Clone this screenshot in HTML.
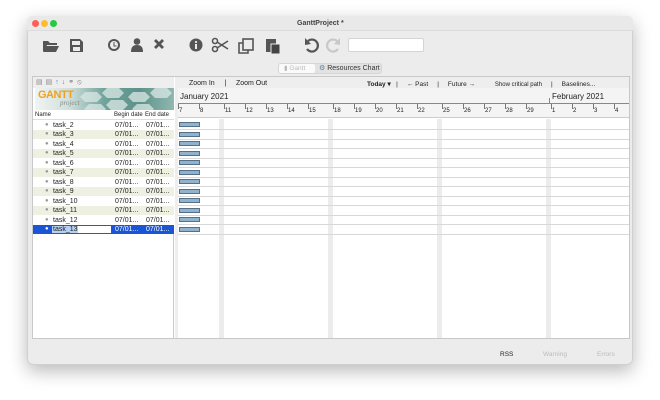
<!DOCTYPE html>
<html><head><meta charset="utf-8"><style>
*{margin:0;padding:0;box-sizing:border-box}
body{width:660px;height:400px;background:#fff;position:relative;overflow:hidden;font-family:"Liberation Sans",sans-serif;color:#222}
.a{position:absolute}
.win{left:27px;top:16px;width:606px;height:349px;background:#ececec;border-radius:6px;box-shadow:0 6px 18px rgba(0,0,0,.28);border:1px solid #d0d0d0}
.t{font-size:7px;position:absolute;white-space:nowrap}
</style></head><body>
<div class="a win"></div>
<div class="a" style="left:27px;top:16px;width:606px;height:15px;background:#e9e9e9;border-radius:6px 6px 0 0;border-bottom:1px solid #dcdcdc"></div>
<div class="a" style="left:32px;top:20px;width:7px;height:7px;border-radius:50%;background:#fe5f57"></div>
<div class="a" style="left:41px;top:20px;width:7px;height:7px;border-radius:50%;background:#febc2e"></div>
<div class="a" style="left:50px;top:20px;width:7px;height:7px;border-radius:50%;background:#28c840"></div>
<div class="t" style="left:297px;top:20px;font-weight:bold;color:#444">GanttProject *</div>

<svg class="a" style="left:0;top:0" width="660" height="60">
<g fill="#555">
<path d="M43 41h5l2 2h7v2h-10l-3 6h-1z"/><path d="M46 46h13l-3 6h-13z"/>
<path d="M70 39h10l3 3v10h-13z M72 41v4h8v-4z M73 47v4h7v-4z" fill-rule="evenodd"/>
<circle cx="114" cy="45" r="6"/><circle cx="114" cy="45" r="4" fill="#ececec"/><path d="M113.5 42h1v3.5h2v1h-3z"/>
<circle cx="137" cy="41.5" r="3.3"/><path d="M131 52c0-5 2-7 6-7s6 2 6 7z"/>
<path d="M154 41l2-2 3 3 3-3 2 2-3 3 3 3-2 2-3-3-3 3-2-2 3-3z"/>
<circle cx="196" cy="45" r="6.5"/><rect x="195" y="44" width="2" height="5" fill="#ececec"/><circle cx="196" cy="42" r="1.1" fill="#ececec"/>
</g>
<g fill="none" stroke="#555" stroke-width="1.6">
<circle cx="215" cy="41" r="2.5"/><circle cx="215" cy="49" r="2.5"/><path d="M217 42l11 7M217 48l11-7"/>
<path d="M243 43h-4v10h9v-3"/><rect x="243" y="39" width="10" height="11"/>
</g>
<path d="M308 41a6 6 0 1 1-1 8" fill="none" stroke="#555" stroke-width="2.2"/>
<path d="M305 38l0 7 6-1z" fill="#555"/>
<g fill="#555"><rect x="266" y="39" width="10" height="13"/><rect x="271" y="44" width="9" height="10" fill="#444" stroke="#ececec"/></g>
<path d="M337 41a6 6 0 1 0 1 8" fill="none" stroke="#c8c8c8" stroke-width="2.2"/><path d="M340 38l0 7-6-1z" fill="#c8c8c8"/>
</svg>
<div class="a" style="left:348px;top:38px;width:76px;height:14px;background:#fff;border:1px solid #d4d4d4;border-radius:2px"></div>

<div class="a" style="left:278px;top:63px;width:104px;height:11px;background:#e2e2e2;border:1px solid #d6d6d6;border-radius:3px"></div>
<div class="a" style="left:279px;top:64px;width:36px;height:9px;background:#fafafa;border-radius:2px"></div>
<div class="t" style="left:284px;top:64px;color:#bbb;font-size:6.5px">▮ Gantt</div>
<div class="t" style="left:319px;top:64px;color:#333;font-size:7px"><span style="color:#5a7ea8">⚙</span> Resources Chart</div>

<div class="a" style="left:32px;top:76px;width:598px;height:263px;background:#fff;border:1px solid #c8c8c8"></div>
<div class="a" style="left:33px;top:77px;width:141px;height:261px;background:#fff;border-right:1px solid #c8c8c8"></div>
<div class="a" style="left:33px;top:77px;width:141px;height:11px;background:#eee"></div>
<div class="t" style="left:36px;top:78px;color:#888;font-size:7px;letter-spacing:3px">▤▤<span style="color:#4a8ab0">↑↓</span>⚭⦸</div>
<div class="a" style="left:35px;top:88px;width:139px;height:22px;background:linear-gradient(90deg,#f0f4f2 0%,#cfdfdb 25%,#6fa39b 50%,#5d9289 75%,#8fb8b1 100%)"></div>
<svg class="a" style="left:75px;top:88px" width="99" height="22"><g fill="#dbe8e5" opacity=".75"><path d="M10 4h12l5 5-5 5h-12l-5-5z"/><path d="M32 0h12l5 5-5 5h-12l-5-5z"/><path d="M36 12h12l5 5-5 5h-12l-5-5z"/><path d="M58 4h12l5 5-5 5h-12l-5-5z"/><path d="M80 0h12l5 5-5 5h-12l-5-5z"/><path d="M14 16h12l5 5-5 5h-12l-5-5z"/><path d="M62 16h12l5 5-5 5h-12l-5-5z"/></g></svg>
<div class="t" style="left:38px;top:89px;font-size:11px;font-weight:bold;color:#f0a020;letter-spacing:-.5px">GANTT</div>
<div class="t" style="left:60px;top:99px;font-size:7px;font-style:italic;color:#888;font-family:'Liberation Serif',serif">project</div>
<div class="a" style="left:33px;top:110px;width:141px;height:10px;background:#fff;border-bottom:1px solid #ddd"></div>
<div class="t" style="left:35px;top:112px;font-size:6px">Name</div>
<div class="t" style="left:114px;top:112px;font-size:6px">Begin date</div>
<div class="t" style="left:145px;top:112px;font-size:6px">End date</div>
<div id="rows"></div>

<div class="a" style="left:175px;top:77px;width:3px;height:261px;background:#eee"></div>
<div class="a" style="left:178px;top:77px;width:451px;height:11px;background:#eee"></div>
<div class="t" style="left:189px;top:80px">Zoom In &nbsp; &nbsp; | &nbsp; &nbsp; Zoom Out</div>
<div class="t" style="left:367px;top:80px;font-size:6.5px"><b>Today ▾</b> &nbsp; | &nbsp; &nbsp; ← Past &nbsp; &nbsp; | &nbsp; &nbsp; Future → &nbsp; &nbsp; &nbsp; &nbsp; &nbsp; <span style="font-size:6px">Show critical path</span> &nbsp; &nbsp; | &nbsp; &nbsp; Baselines...</div>
<div class="a" style="left:178px;top:88px;width:451px;height:16px;background:#f4f4f4;border-bottom:1px solid #888"></div>
<div class="t" style="left:180px;top:92px;font-size:8px">January 2021</div>
<div class="a" style="left:549px;top:98px;width:1px;height:6px;background:#888"></div>
<div class="t" style="left:552px;top:92px;font-size:8px">February 2021</div>
<div class="a" style="left:178px;top:104px;width:451px;height:14px;background:#f4f4f4;border-bottom:1px solid #ccc"></div>
<div id="chart"></div>

<div class="t" style="left:500px;top:351px;font-size:6.5px;color:#222">RSS</div>
<div class="t" style="left:543px;top:351px;font-size:6.5px;color:#bbb">Warning</div>
<div class="t" style="left:597px;top:351px;font-size:6.5px;color:#bbb">Errors</div>

<script>
var r='';for(var i=0;i<12;i++){var y=120+i*9.5,sel=i==11;
var bg=sel?'#1a55d6':(i%2?'#eef0e2':'#fff');var c=sel?'#fff':'#222';
r+='<div class="a" style="left:33px;top:'+y+'px;width:141px;height:9.5px;background:'+bg+'"></div>';
r+='<div class="t" style="left:45px;top:'+(y+1.5)+'px;color:'+(sel?'#fff':'#999')+';font-size:6px">●</div>';
if(sel)r+='<div class="a" style="left:51px;top:'+y+'px;width:61px;height:9.5px;background:#fff;border:1px solid #555"></div><div class="a" style="left:52px;top:'+(y+1)+'px;width:26px;height:7.5px;background:#b6d0f4"></div>';
r+='<div class="t" style="left:53px;top:'+(y+1.5)+'px;color:#222">task_'+(i+2)+'</div>';
r+='<div class="t" style="left:115px;top:'+(y+1.5)+'px;color:'+c+'">07/01...</div><div class="t" style="left:146px;top:'+(y+1.5)+'px;color:'+c+'">07/01...</div>';}
document.getElementById('rows').innerHTML=r;
var h='';
[219,328,437,546].forEach(function(x){h+='<div class="a" style="left:'+x+'px;top:119px;width:5px;height:219px;background:#ececec"></div>';});
var d=[[7,178],[8,199],[11,224],[12,245],[13,266],[14,287],[15,308],[18,333],[19,354],[20,375],[21,396],[22,417],[25,442],[26,463],[27,484],[28,505],[29,526],[1,551],[2,572],[3,593],[4,614]];
d.forEach(function(p){h+='<div class="a" style="left:'+p[1]+'px;top:104px;width:1px;height:5px;background:#777"></div><div class="t" style="left:'+(p[1]+1)+'px;top:108px;font-size:6px">'+p[0]+'</div>';});
for(var i=0;i<12;i++){var y=120+i*9.5;
h+='<div class="a" style="left:178px;top:'+(y+9)+'px;width:451px;height:1px;background:#d8d8d8"></div>';
h+='<div class="a" style="left:179px;top:'+(y+2)+'px;width:21px;height:5px;background:#8fb3cc;border:1px solid #56708a"></div>';}
document.getElementById('chart').innerHTML=h;
</script>
</body></html>
